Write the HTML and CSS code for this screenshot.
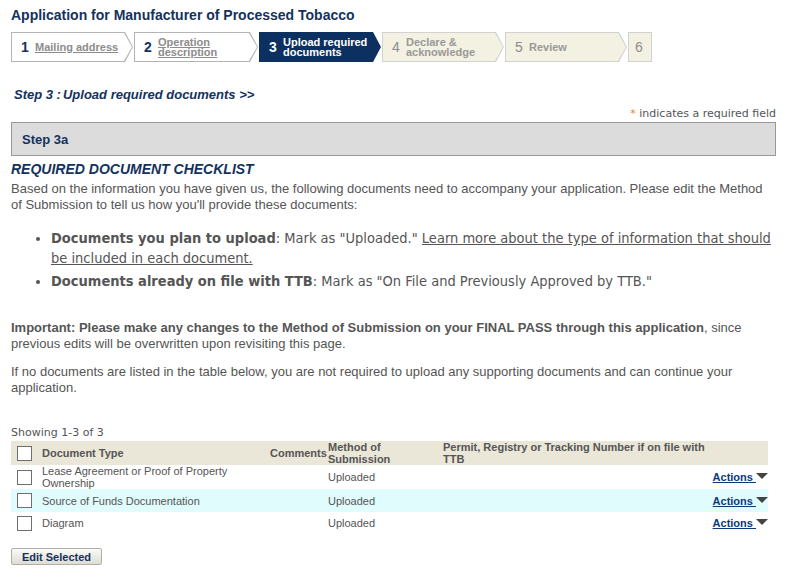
FILE: index.html
```html
<!DOCTYPE html>
<html lang="en">
<head>
  <meta charset="UTF-8">
  <meta name="viewport" content="width=device-width, initial-scale=1.0">
  <title>Application for Manufacturer of Processed Tobacco</title>
  <link rel="stylesheet" href="styles.css">
</head>
<body>
  <div class="page">
    <h1 class="app-title">Application for Manufacturer of Processed Tobacco</h1>

    <ol class="steps">
      <li class="step done w1"><div class="step-inner"><span class="num">1</span><a href="#" class="label">Mailing address</a></div></li>
      <li class="step done w2"><div class="step-inner"><span class="num">2</span><a href="#" class="label">Operation<br>description</a></div></li>
      <li class="step current"><div class="step-inner"><span class="num">3</span><span class="label">Upload required<br>documents</span></div></li>
      <li class="step todo"><div class="step-inner"><span class="num">4</span><span class="label">Declare &amp;<br>acknowledge</span></div></li>
      <li class="step todo"><div class="step-inner"><span class="num">5</span><span class="label">Review</span></div></li>
      <li class="step todo last"><div class="step-inner"><span class="num">6</span></div></li>
    </ol>

    <h2 class="step-heading">Step 3 :<span class="sp"></span>Upload required documents &gt;&gt;</h2>

    <p class="required-note"><span class="star">*</span> indicates a required field</p>

    <div class="section-bar">Step 3a</div>

    <h3 class="checklist-title">REQUIRED DOCUMENT CHECKLIST</h3>
    <p class="intro">Based on the information you have given us, the following documents need to accompany your application. Please edit the Method of Submission to tell us how you'll provide these documents:</p>

    <ul class="doc-rules">
      <li><b>Documents you plan to upload</b>: Mark as "Uploaded." <a href="#">Learn more about the type of information that should be included in each document.</a></li>
      <li><b>Documents already on file with TTB</b>: Mark as "On File and Previously Approved by TTB."</li>
    </ul>

    <p class="note"><b>Important: Please make any changes to the Method of Submission on your FINAL PASS through this application</b>, since previous edits will be overwritten upon revisiting this page.</p>
    <p class="note">If no documents are listed in the table below, you are not required to upload any supporting documents and can continue your application.</p>

    <p class="showing">Showing 1-3 of 3</p>

    <table class="doc-table">
      <colgroup>
        <col class="c-check">
        <col class="c-type">
        <col class="c-comments">
        <col class="c-method">
        <col class="c-permit">
        <col class="c-actions">
      </colgroup>
      <thead>
        <tr>
          <th><span class="box"></span></th>
          <th>Document Type</th>
          <th>Comments</th>
          <th>Method of Submission</th>
          <th>Permit, Registry or Tracking Number if on file with TTB</th>
          <th></th>
        </tr>
      </thead>
      <tbody>
        <tr class="r1">
          <td><span class="box"></span></td>
          <td>Lease Agreement or Proof of Property Ownership</td>
          <td></td>
          <td>Uploaded</td>
          <td></td>
          <td class="act"><a href="#">Actions </a><span class="caret"></span></td>
        </tr>
        <tr class="r2 alt">
          <td><span class="box"></span></td>
          <td>Source of Funds Documentation</td>
          <td></td>
          <td>Uploaded</td>
          <td></td>
          <td class="act"><a href="#">Actions </a><span class="caret"></span></td>
        </tr>
        <tr class="r3">
          <td><span class="box"></span></td>
          <td>Diagram</td>
          <td></td>
          <td>Uploaded</td>
          <td></td>
          <td class="act"><a href="#">Actions </a><span class="caret"></span></td>
        </tr>
      </tbody>
    </table>

    <button class="edit-btn" type="button">Edit Selected</button>
  </div>
</body>
</html>
```

FILE: styles.css
```css
* {
  box-sizing: border-box;
  margin: 0;
  padding: 0;
}

body {
  font-family: "Liberation Sans", Arial, sans-serif;
  background: #ffffff;
  color: #555555;
}

.page {
  padding: 7px 13px 0 11px;
}

.app-title {
  font-size: 14px;
  font-weight: bold;
  color: #14325c;
  line-height: 16px;
}

/* wizard steps */
.steps {
  list-style: none;
  display: flex;
  gap: 1px;
  margin-top: 9px;
}

.step {
  width: 122px;
  height: 30px;
  padding: 1px;
  background: #b4b4b4;
  clip-path: polygon(0 0, calc(100% - 8px) 0, 100% 50%, calc(100% - 8px) 100%, 0 100%);
}

.step.w2 {
  width: 124px;
}

.step-inner {
  height: 100%;
  display: flex;
  align-items: center;
  padding-left: 9px;
  background: #ffffff;
  clip-path: polygon(0 0, calc(100% - 8px) 0, 100% 50%, calc(100% - 8px) 100%, 0 100%);
}

.num {
  font-size: 14px;
  font-weight: bold;
  color: #14325c;
  width: 14px;
}

.label {
  font-size: 11px;
  font-weight: bold;
  line-height: 10px;
  color: #8c8c8c;
}

.step.current {
  background: #0c3161;
}

.step.current .step-inner {
  background: #0c3161;
}

.step.current .num {
  color: #ffffff;
}

.step.current .label {
  color: #ffffff;
}

.step.todo {
  background: #d2d2d2;
}

.step.todo .step-inner {
  background: #f3f1e1;
}

.step.todo .num {
  color: #8c8c8c;
  font-weight: normal;
}

.step.todo .label {
  color: #999999;
}

.step.last {
  width: 24px;
  clip-path: none;
}

.step.last .step-inner {
  clip-path: none;
  padding-left: 6px;
}

.step-heading {
  font-size: 13px;
  font-weight: bold;
  font-style: italic;
  color: #14325c;
  margin: 25px 0 0 3px;
  line-height: 16px;
}

.step-heading .sp {
  display: inline-block;
  width: 2px;
}

.required-note {
  text-align: right;
  font-family: "DejaVu Sans", Verdana, sans-serif;
  font-size: 11px;
  color: #555555;
  margin-top: 4px;
  line-height: 14px;
}

.star {
  color: #e08a1e;
}

.section-bar {
  margin-top: 1px;
  height: 34px;
  background: #dcdcdc;
  border: 1px solid #999999;
  padding: 9px 0 0 10px;
  font-size: 13px;
  font-weight: bold;
  color: #14325c;
}

.checklist-title {
  font-size: 14px;
  font-weight: bold;
  font-style: italic;
  color: #14325c;
  margin-top: 5px;
  line-height: 16px;
}

.intro {
  font-size: 13px;
  line-height: 16px;
  margin-top: 4px;
}

.doc-rules {
  margin: 15px 0 0 40px;
  font-family: "DejaVu Sans Condensed", Tahoma, sans-serif;
  font-size: 14.5px;
  line-height: 20px;
}

.doc-rules li {
  margin-bottom: 3px;
}

.doc-rules a {
  color: #555555;
}

.note {
  font-size: 13px;
  line-height: 16px;
  margin-top: 29px;
}

.note + .note {
  margin-top: 12px;
}

.showing {
  font-family: "DejaVu Sans", Verdana, sans-serif;
  font-size: 11px;
  margin-top: 30px;
  line-height: 14px;
}

/* documents table */
.doc-table {
  width: 757px;
  border-collapse: collapse;
  table-layout: fixed;
  margin-top: 1px;
  font-size: 11px;
}

.c-check { width: 31px; }
.c-type { width: 228px; }
.c-comments { width: 58px; }
.c-method { width: 115px; }
.c-permit { width: 269px; }
.c-actions { width: 56px; }

.doc-table thead tr {
  background: #ebe7d8;
  height: 24px;
}

.doc-table th {
  text-align: left;
  font-weight: bold;
  line-height: 12px;
  color: #555555;
}

.doc-table th:nth-child(3) {
  text-align: right;
  padding-right: 2px;
}

.doc-table td {
  line-height: 12px;
  vertical-align: middle;
}

.doc-table tr.r1 { height: 24px; }
.doc-table tr.r2 { height: 23px; }
.doc-table tr.r3 { height: 22px; }

.doc-table tr.alt {
  background: #e1fcfc;
}

.box {
  display: block;
  width: 15px;
  height: 15px;
  margin-left: 6px;
  border: 1px solid #6e6e6e;
  background: #ffffff;
}

.act {
  text-align: right;
  white-space: nowrap;
}

.act a {
  color: #0b3a7a;
  font-weight: bold;
}

.caret {
  display: inline-block;
  width: 0;
  height: 0;
  border-left: 6px solid transparent;
  border-right: 6px solid transparent;
  border-top: 6px solid #444444;
  vertical-align: 2px;
}

.edit-btn {
  margin-top: 14px;
  width: 91px;
  height: 17px;
  font-family: "Liberation Sans", Arial, sans-serif;
  font-size: 11px;
  font-weight: bold;
  color: #14325c;
  background: linear-gradient(#fafaf7, #dedcd4);
  border: 1px solid #b0aea6;
  border-radius: 2px;
  cursor: pointer;
}
```
